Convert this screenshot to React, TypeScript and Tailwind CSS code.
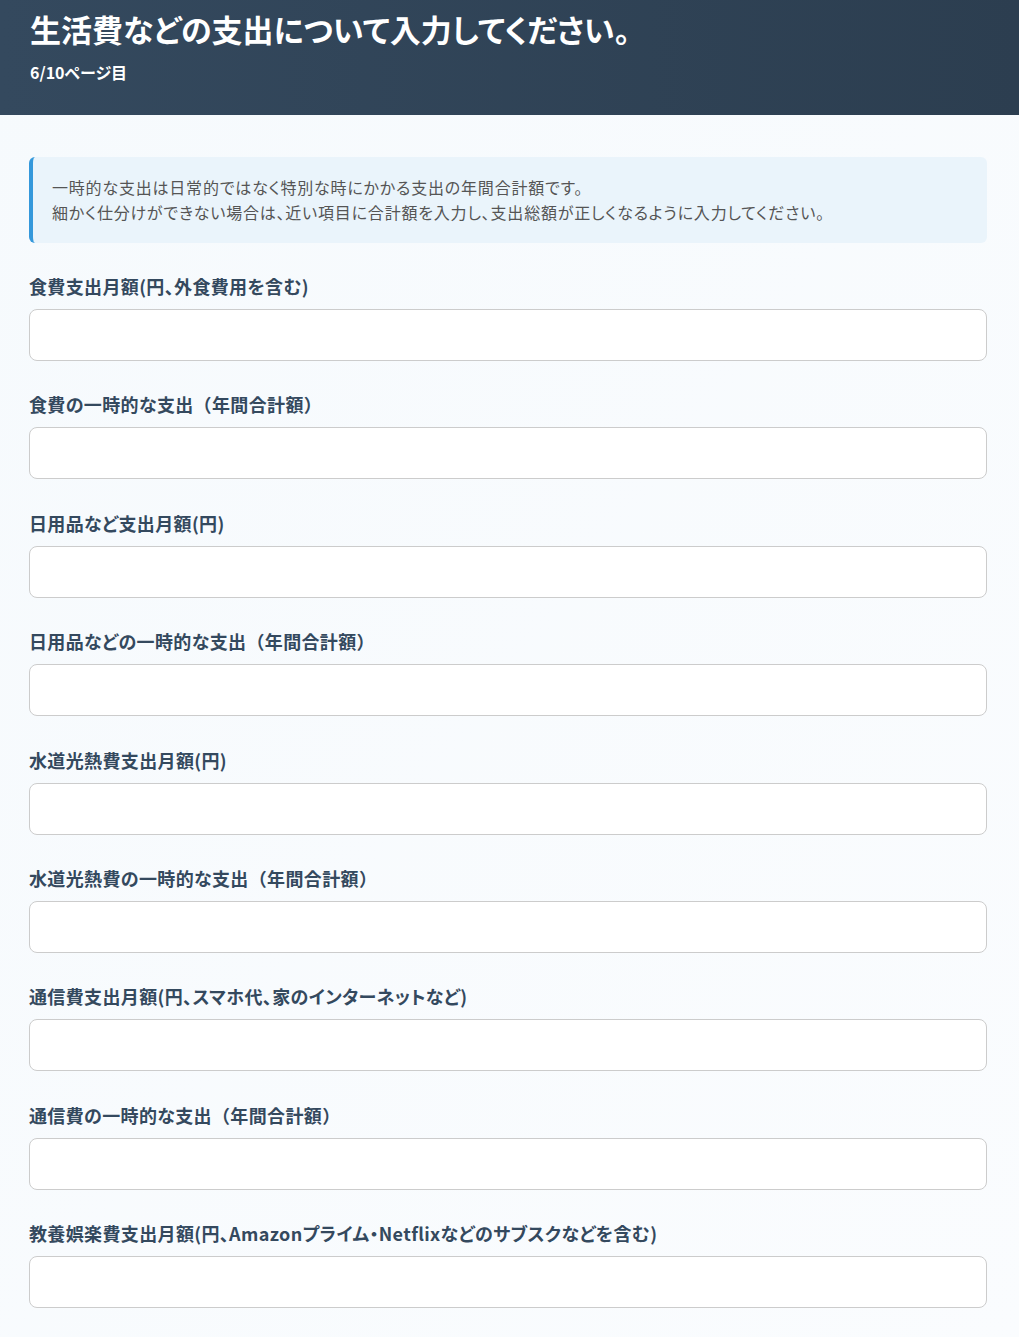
import React from 'react';

const FIELDS = [
  '食費支出月額(円、外食費用を含む)',
  '食費の一時的な支出（年間合計額）',
  '日用品など支出月額(円)',
  '日用品などの一時的な支出（年間合計額）',
  '水道光熱費支出月額(円)',
  '水道光熱費の一時的な支出（年間合計額）',
  '通信費支出月額(円、スマホ代、家のインターネットなど)',
  '通信費の一時的な支出（年間合計額）',
  '教養娯楽費支出月額(円、Amazonプライム・Netflixなどのサブスクなどを含む)',
];

// full-width brackets keep their full width; everything else is set proportionally
function LabelText({ text }: { text: string }) {
  const parts = text.split(/([（）])/);
  return (
    <>
      {parts.map((p, i) =>
        p === '（' || p === '）' ? (
          <span key={i} className="[font-feature-settings:normal]">
            {p}
          </span>
        ) : (
          <React.Fragment key={i}>{p}</React.Fragment>
        )
      )}
    </>
  );
}

function Field({ label }: { label: string }) {
  return (
    <div className="mb-[30.4px]">
      <label className="block mb-[9px] text-[18px] leading-[27px] tracking-[0.02em] font-bold text-[#34495e] [font-feature-settings:'palt']">
        <LabelText text={label} />
      </label>
      <input
        type="text"
        className="block w-full h-[52px] rounded-[8px] border border-[#cccccc] bg-white px-4 text-[16px] outline-none"
      />
    </div>
  );
}

export default function App() {
  return (
    <div
      className="min-h-screen bg-gradient-to-br from-[#f6fafd] to-[#fafcfe]"
      style={{ fontFamily: '"Noto Sans CJK JP", "Noto Sans", sans-serif' }}
    >
      {/* Header */}
      <header className="h-[115px] bg-gradient-to-r from-[#34495e] to-[#2c3e50] pl-[30px] pt-[9px]">
        <h1 className="text-[31px] leading-[40px] font-bold text-white [font-feature-settings:'palt']">
          生活費などの支出について入力してください。
        </h1>
        <p className="mt-[11px] text-[16px] leading-[24px] font-bold text-white [font-feature-settings:'palt']">
          6/10ページ目
        </p>
      </header>

      <main className="pl-[29px] pr-[32px] pt-[42px] pb-[10px]">
        {/* Info box */}
        <div className="mb-[30px] rounded-[6px] border-l-4 border-[#3498db] bg-[#eaf4fb] pl-[19px] pr-4 py-[18px] text-[16px] leading-[25px] tracking-[0.05em] text-[#555555] [font-feature-settings:'palt']">
          <p>一時的な支出は日常的ではなく特別な時にかかる支出の年間合計額です。</p>
          <p>細かく仕分けができない場合は、近い項目に合計額を入力し、支出総額が正しくなるように入力してください。</p>
        </div>

        {FIELDS.map((f) => (
          <Field key={f} label={f} />
        ))}
      </main>
    </div>
  );
}
